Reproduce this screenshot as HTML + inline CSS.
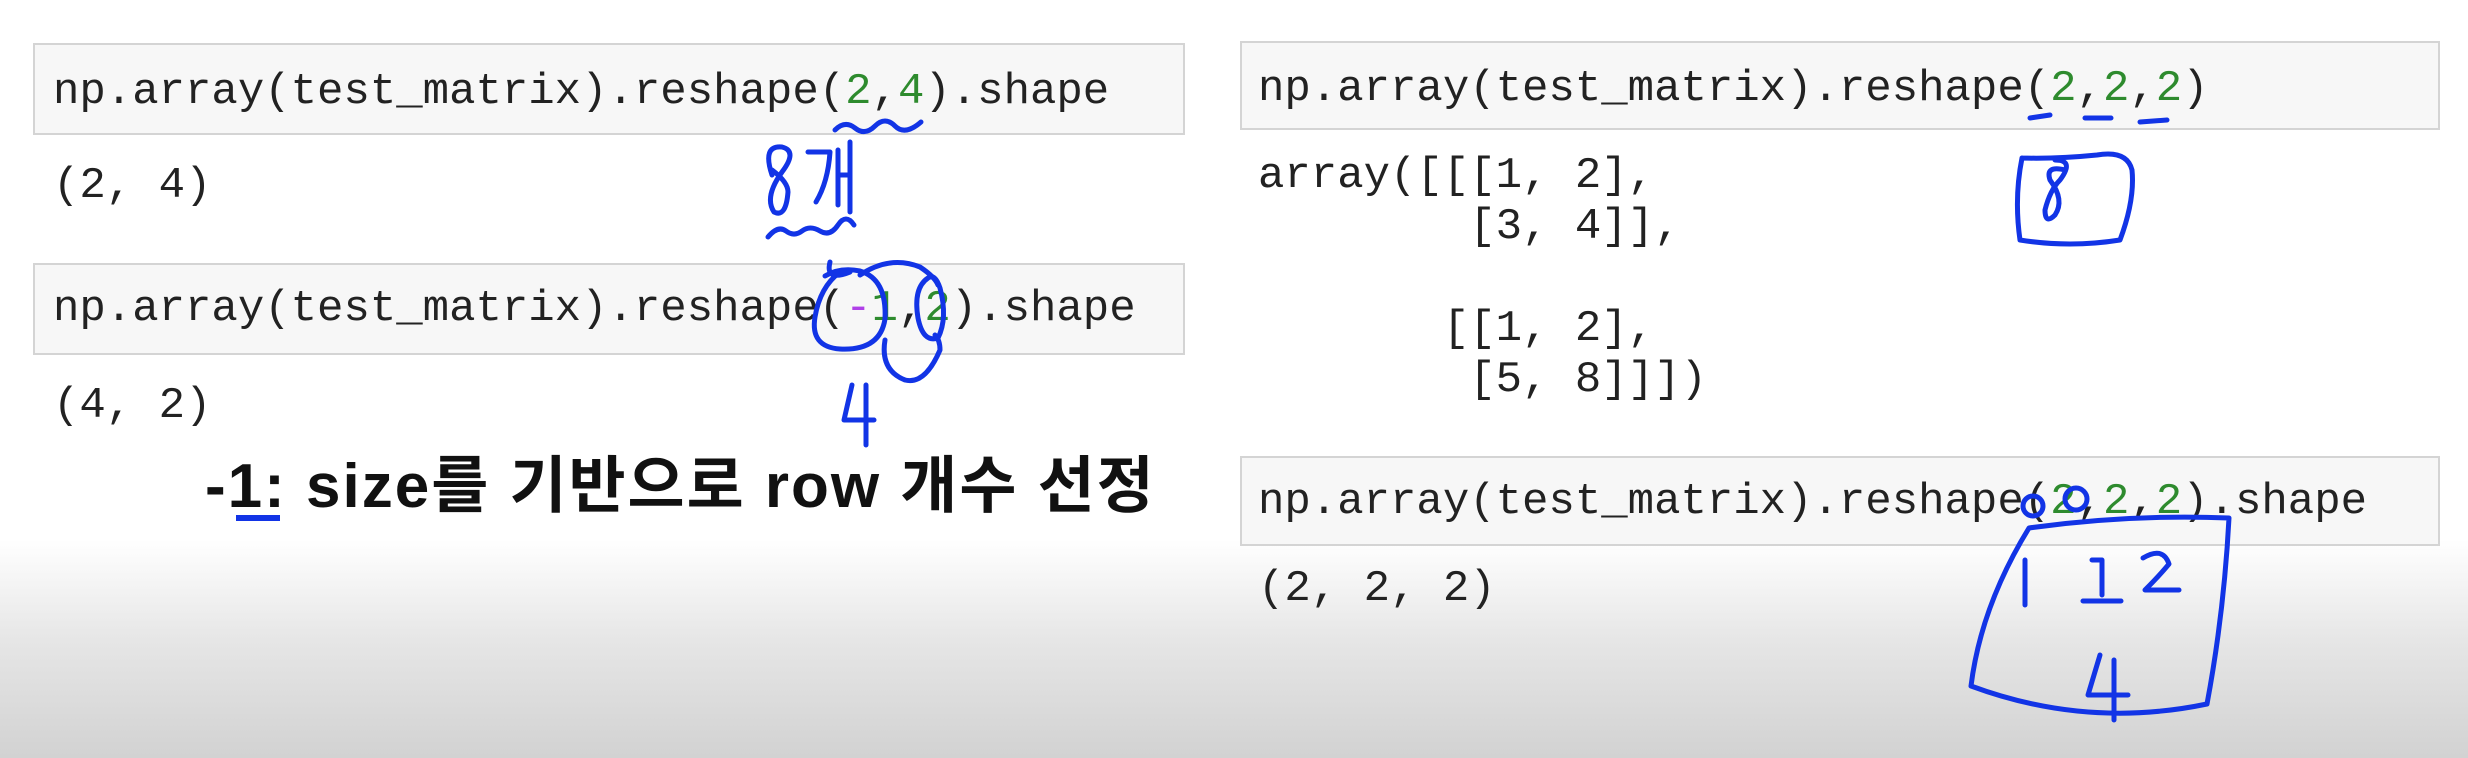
<!DOCTYPE html>
<html><head><meta charset="utf-8"><style>
body{margin:0;width:2468px;height:758px;overflow:hidden;position:relative;
background:linear-gradient(#fff 0,#fff 540px,#e6e6e6 640px,#d2d2d2 758px);
font-family:"Liberation Mono",monospace;color:#222}
.cell{position:absolute;background:#f7f7f7;border:2px solid #d4d4d4;box-sizing:border-box}
.t{position:absolute;font-size:44px;line-height:44px;white-space:pre}
.g{color:#2e8b2e}.p{color:#b040e8}
.ko{position:absolute;left:205px;top:452px;font-family:"Liberation Sans","Noto Sans CJK KR",sans-serif;font-weight:bold;font-size:62px;line-height:70px;color:#111;white-space:pre;letter-spacing:2px}
svg{position:absolute;left:0;top:0}
</style></head><body>
<div class="cell" style="left:33px;top:43px;width:1152px;height:92px"></div>
<div class="cell" style="left:33px;top:263px;width:1152px;height:92px"></div>
<div class="cell" style="left:1240px;top:41px;width:1200px;height:89px"></div>
<div class="cell" style="left:1240px;top:456px;width:1200px;height:90px"></div>

<div class="t" style="left:53px;top:70px">np.array(test_matrix).reshape(<span class="g">2</span>,<span class="g">4</span>).shape</div>
<div class="t" style="left:53px;top:164px">(2, 4)</div>
<div class="t" style="left:53px;top:287px">np.array(test_matrix).reshape(<span class="p">-</span><span class="g">1</span>,<span class="g">2</span>).shape</div>
<div class="t" style="left:53px;top:384px">(4, 2)</div>
<div class="ko">-1: size를 기반으로 row 개수 선정</div>

<div class="t" style="left:1258px;top:67px">np.array(test_matrix).reshape(<span class="g">2</span>,<span class="g">2</span>,<span class="g">2</span>)</div>
<div class="t" style="left:1258px;top:151px;line-height:51px">array([[[1, 2],
        [3, 4]],

       [[1, 2],
        [5, 8]]])</div>
<div class="t" style="left:1258px;top:480px">np.array(test_matrix).reshape(<span class="g">2</span>,<span class="g">2</span>,<span class="g">2</span>).shape</div>
<div class="t" style="left:1258px;top:567px">(2, 2, 2)</div>

<svg width="2468" height="758" fill="none" stroke="#1234e6" stroke-width="5" stroke-linecap="round" stroke-linejoin="round">
<rect x="236" y="515" width="44" height="6" fill="#1234e6" stroke="none"/>
<path d="M835 130 q10-10 20-2 t20-2 t20 0 t26-4"/>
<path d="M772 175 q-10-30 10-28 q16 4 0 25 q-18 25-8 40 q12 6 14-20 q0-10-16-22"/>
<path d="M808 152 h22 q-2 30-14 50 M838 150 v55 M850 142 v70 M838 175 h12"/>
<path d="M768 237 q10-12 18-6 t16 0 t18 0 t18-6 t16 0"/>
<path d="M840 272 q-20 15-25 45 q-5 30 25 32 q40 2 45-30 q2-40-25-48 q-20-4-35 5"/>
<path d="M860 275 q30-20 60-8 q15 10 18 18"/>
<path d="M830 262 q-5 20 20 10"/>
<path d="M928 278 q-15 10-10 40 q5 25 20 20 q10-20 2-50 q-5-15-12-10"/>
<path d="M885 340 q-5 30 20 40 q20 5 35-30 q0-10-5-15"/>
<path d="M852 385 l-8 35 h30 M866 385 v60"/>
<path d="M2030 118 l20-3 M2085 118 h26 M2140 122 l27-2"/>
<path d="M2022 158 q-8 40-2 82 q50 8 100 0 q15-40 12-70 q-5-20-35-15 q-40 4-75 3"/>
<path d="M2065 170 q-20-5-15 10 q15 20 5 35 q-10 10-10-5 q5-20 15-30 q15-20-5-20"/>
<circle cx="2033" cy="506" r="10"/><circle cx="2076" cy="499" r="11"/>
<path d="M2029 528 q100-14 200-10 q-5 95-22 186 q-120 25-236-18 q10-80 58-158"/>
<path d="M2025 560 v45 M2092 560 h10 v35 M2083 601 h38 M2143 558 q20-12 26 6 q-10 12-24 26 h34"/>
<path d="M2100 655 l-12 40 h40 M2114 660 v60"/>
</svg>
</body></html>
